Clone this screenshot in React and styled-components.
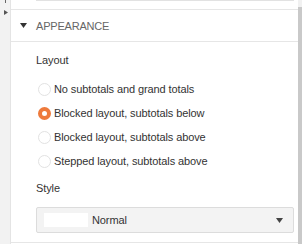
import styled, { createGlobalStyle } from 'styled-components';

const GlobalStyle = createGlobalStyle`
  html, body {
    margin: 0;
    padding: 0;
    background: #ffffff;
  }
  body {
    font-family: "Liberation Sans", Arial, sans-serif;
    font-size: 11px;
    letter-spacing: -0.1px;
    color: #333333;
  }
`;

const layouts = [
  { id: 'none', label: 'No subtotals and grand totals' },
  { id: 'below', label: 'Blocked layout, subtotals below', checked: true },
  { id: 'above', label: 'Blocked layout, subtotals above' },
  { id: 'stepped', label: 'Stepped layout, subtotals above' },
];

const App = () => {
  return (
    <>
      <GlobalStyle />
      <Frame>
        <SideStrip>
          <Tick />
          <svg width="4" height="5" viewBox="0 0 4 5">
            <path d="M0 0 L4 2.5 L0 5 Z" fill="#555" />
          </svg>
        </SideStrip>
        <Panel>
          <PrevSection>
            <PrevBox />
          </PrevSection>
          <SectionHeader>
            <svg width="7" height="5" viewBox="0 0 7 5">
              <path d="M0 0 L7 0 L3.5 5 Z" fill="#333" />
            </svg>
            <HeaderTitle>APPEARANCE</HeaderTitle>
          </SectionHeader>
          <SectionBody>
            <FieldLabel>Layout</FieldLabel>
            <RadioList>
              {layouts.map((item) => (
                <RadioRow key={item.id}>
                  <RadioDot $checked={item.checked} />
                  <span>{item.label}</span>
                </RadioRow>
              ))}
            </RadioList>
            <FieldLabel $top={8}>Style</FieldLabel>
            <Select>
              <Swatch />
              <SelectText>Normal</SelectText>
              <svg width="7" height="5" viewBox="0 0 7 5">
                <path d="M0 0 L7 0 L3.5 5 Z" fill="#444" />
              </svg>
            </Select>
          </SectionBody>
        </Panel>
        <Scrollbar>
          <Thumb />
        </Scrollbar>
      </Frame>
    </>
  );
};

const Frame = styled.div`
  display: flex;
  width: 302px;
  height: 244px;
  overflow: hidden;
`;

const SideStrip = styled.div`
  width: 9px;
  flex-shrink: 0;
  background: #f2f2f2;
  border-right: 1px solid #e4e4e4;
  display: flex;
  flex-direction: column;
  align-items: center;
  gap: 7px;
  padding-left: 1px;
`;

const Tick = styled.div`
  width: 1px;
  height: 3px;
  background: #666;
`;

const Panel = styled.div`
  flex: 1;
  display: flex;
  flex-direction: column;
  min-width: 0;
`;

const PrevSection = styled.div`
  height: 9px;
  border-bottom: 1px solid #e6e6e6;
  padding: 0 4px 0 25px;
`;

const PrevBox = styled.div`
  height: 0;
  border-bottom: 1px solid #e2e2e2;
`;

const SectionHeader = styled.div`
  height: 31px;
  border-bottom: 1px solid #e6e6e6;
  display: flex;
  align-items: center;
  padding-left: 9px;
  gap: 9px;
`;

const HeaderTitle = styled.span`
  font-size: 11px;
  color: #666666;
  letter-spacing: -0.2px;
`;

const SectionBody = styled.div`
  padding: 11px 4px 9px 25px;
  border-bottom: 1px solid #e6e6e6;
  display: flex;
  flex-direction: column;
`;

const FieldLabel = styled.div`
  line-height: 14px;
  margin-top: ${(p) => (p.$top ? p.$top : 0)}px;
  color: #333333;
`;

const RadioList = styled.div`
  display: flex;
  flex-direction: column;
  margin-top: 10px;
`;

const RadioRow = styled.div`
  height: 24px;
  display: flex;
  align-items: center;
  gap: 3px;
  padding-left: 2px;
  color: #333333;
`;

const RadioDot = styled.span`
  box-sizing: border-box;
  width: 13px;
  height: 13px;
  border-radius: 50%;
  background: #ffffff;
  border: ${(p) => (p.$checked ? '4px solid #ee7a3c' : '1px solid #e2e2e2')};
  flex-shrink: 0;
`;

const Select = styled.div`
  box-sizing: border-box;
  margin-top: 12px;
  height: 26px;
  background: #f3f3f3;
  border: 1px solid #dcdcdc;
  border-radius: 2px;
  display: flex;
  align-items: center;
  padding: 0 10px 0 7px;
`;

const Swatch = styled.div`
  width: 44px;
  height: 14px;
  background: #ffffff;
`;

const SelectText = styled.span`
  flex: 1;
  margin-left: 4px;
  color: #333333;
`;

const Scrollbar = styled.div`
  width: 4px;
  flex-shrink: 0;
  background: #f1f1f1;
  display: flex;
  justify-content: flex-end;
  padding-top: 7px;
`;

const Thumb = styled.div`
  width: 3px;
  flex: 1;
  background: #c9c9c9;
`;

export default App;
